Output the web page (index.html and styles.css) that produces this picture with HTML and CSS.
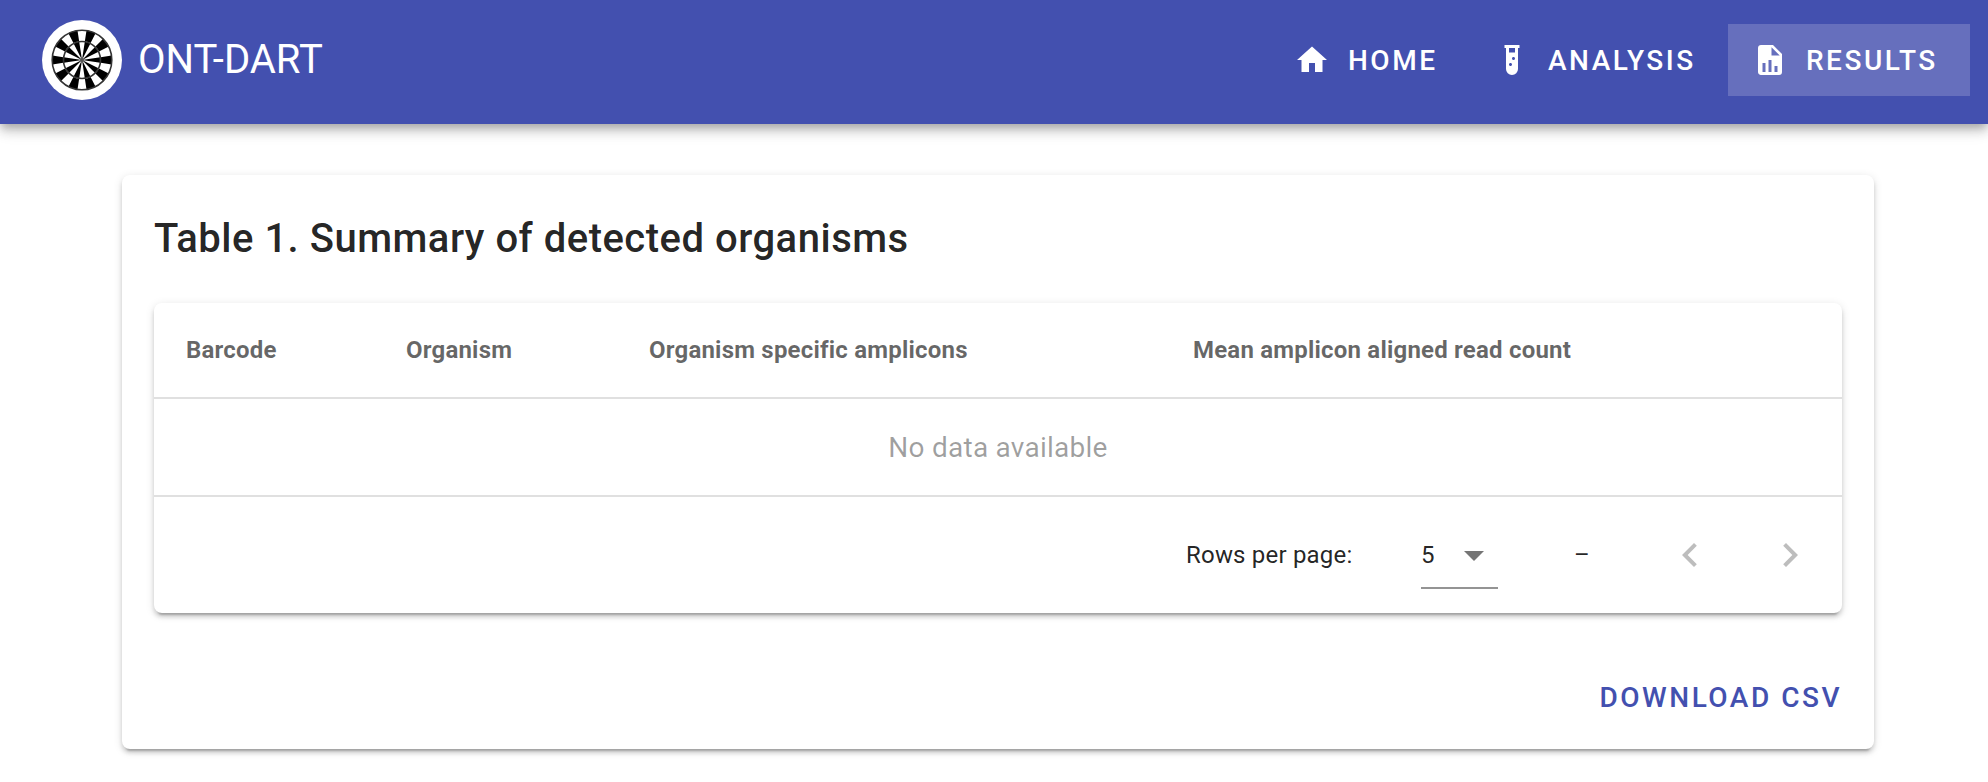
FILE: index.html
```html
<!DOCTYPE html>
<html lang="en">
<head>
<meta charset="utf-8">
<title>ONT-DART</title>
<link rel="stylesheet" href="styles.css">
</head>
<body>
<header class="toolbar">
  <div class="brand">
    <svg class="logo" viewBox="-40 -40 80 80">
      <circle r="40" fill="#fff"/>
      <circle class="ring-cells" r="24.5" pathLength="20"/>
      <circle class="bull-cells" r="9.25" pathLength="20"/>
      <circle class="wire" r="29.8"/>
      <circle class="wire" r="18.5"/>
      <circle r="2" fill="#555"/>
    </svg>
    <span class="brand-name">ONT-DART</span>
  </div>
  <nav class="nav">
    <a class="nav-item home"><svg class="icon" viewBox="0 0 24 24"><path d="M10,20V14H14V20H19V12H22L12,3L2,12H5V20H10Z"/></svg>HOME</a>
    <a class="nav-item analysis"><svg class="icon" viewBox="0 0 24 24"><path d="M7,2V4H8V18A4,4 0 0,0 12,22A4,4 0 0,0 16,18V4H17V2H7M11,16C10.4,16 10,15.6 10,15C10,14.4 10.4,14 11,14C11.6,14 12,14.4 12,15C12,15.6 11.6,16 11,16M13,12C12.4,12 12,11.6 12,11C12,10.4 12.4,10 13,10C13.6,10 14,10.4 14,11C14,11.6 13.6,12 13,12M14,7H10V4H14V7Z"/></svg>ANALYSIS</a>
    <a class="nav-item results active"><svg class="icon" viewBox="0 0 24 24"><path d="M13,9H18.5L13,3.5V9M6,2H14L20,8V20A2,2 0 0,1 18,22H6C4.89,22 4,21.1 4,20V4C4,2.89 4.89,2 6,2M7,20H9V14H7V20M11,20H13V12H11V20M15,20H17V16H15V20Z"/></svg>RESULTS</a>
  </nav>
</header>
<main class="card">
  <h1 class="card-title">Table 1. Summary of detected organisms</h1>
  <section class="table-card">
    <table class="table">
      <thead><tr><th class="c1">Barcode</th><th class="c2">Organism</th><th class="c3">Organism specific amplicons</th><th>Mean amplicon aligned read count</th></tr></thead>
      <tbody><tr><td colspan="4">No data available</td></tr></tbody>
    </table>
    <footer class="pager">
      <span class="label">Rows per page:</span>
      <div class="select"><span>5</span><svg class="caret" viewBox="0 0 20 10"><path d="M0 0H20L10 10Z"/></svg></div>
      <span class="range">–</span>
      <svg class="chevron prev" viewBox="0 0 24 24"><path d="M15.41,16.58L10.83,12L15.41,7.41L14,6L8,12L14,18L15.41,16.58Z"/></svg>
      <svg class="chevron next" viewBox="0 0 24 24"><path d="M8.59,16.58L13.17,12L8.59,7.41L10,6L16,12L10,18L8.59,16.58Z"/></svg>
    </footer>
  </section>
  <div class="actions"><a class="download">DOWNLOAD CSV</a></div>
</main>
</body>
</html>
```
FILE: styles.css
```css
* { box-sizing: border-box; }

body {
  margin: 0;
  height: 782px;
  overflow: hidden;
  background: #fff;
  color: rgba(0, 0, 0, .87);
  font-family: Roboto, sans-serif;
}

.toolbar {
  display: flex;
  justify-content: space-between;
  height: 124px;
  padding: 20px 18px 0 42px;
  background: #4350af;
  color: #fff;
  box-shadow: 0 4px 8px -2px rgba(0, 0, 0, .2), 0 8px 10px rgba(0, 0, 0, .14), 0 2px 20px rgba(0, 0, 0, .12);
}

.brand { display: flex; height: 80px; gap: 16px; }
.logo { width: 80px; height: 80px; }
.ring-cells { fill: none; stroke: #000; stroke-width: 11; stroke-dasharray: 1 1; stroke-dashoffset: .5; }
.bull-cells { fill: none; stroke: #000; stroke-width: 18.5; stroke-dasharray: 1 1; stroke-dashoffset: .5; }
.wire { fill: none; stroke: #333; stroke-width: 1.6; }
.brand-name { font-size: 40px; line-height: 80px; }

.nav { display: flex; height: 72px; margin-top: 4px; }
.nav-item {
  display: flex;
  align-items: center;
  font-size: 28px;
  font-weight: 500;
  letter-spacing: 2.5px;
}
.icon { width: 36px; height: 36px; margin-right: 18px; fill: currentColor; }
.home { width: 200px; padding-left: 26px; }
.analysis { width: 260px; padding-left: 26px; }
.results { width: 242px; padding-left: 24px; }
.active { background: #666fbd; }

.card {
  width: 1752px;
  height: 574px;
  margin: 51px 0 0 122px;
  padding: 32px;
  border-radius: 8px;
  background: #fff;
  box-shadow: 0 6px 2px -4px rgba(0, 0, 0, .2), 0 4px 4px rgba(0, 0, 0, .14), 0 2px 10px rgba(0, 0, 0, .12);
}
.card-title {
  margin: 0 0 32px;
  font-size: 40px;
  font-weight: 500;
  letter-spacing: .5px;
  line-height: 64px;
}

.table-card {
  height: 310px;
  border-radius: 8px;
  box-shadow: 0 6px 2px -4px rgba(0, 0, 0, .2), 0 4px 4px rgba(0, 0, 0, .14), 0 2px 10px rgba(0, 0, 0, .12);
}
.table { width: 100%; border-collapse: separate; border-spacing: 0; table-layout: fixed; }
.table th {
  height: 96px;
  padding: 0 32px;
  border-bottom: 2px solid #e0e0e0;
  color: rgba(0, 0, 0, .6);
  font-size: 24px;
  font-weight: 700;
  letter-spacing: .2px;
  text-align: left;
}
.c1 { width: 220px; }
.c2 { width: 243px; }
.c3 { width: 544px; }
.table td {
  height: 98px;
  padding: 0;
  border-bottom: 2px solid #e0e0e0;
  color: rgba(0, 0, 0, .38);
  font-size: 28px;
  letter-spacing: .25px;
  text-align: center;
}

.pager { display: flex; align-items: center; height: 116px; padding-left: 1032px; font-size: 24px; }
.label { width: 235px; letter-spacing: .2px; }
.select {
  display: flex;
  align-items: center;
  justify-content: space-between;
  width: 77px;
  height: 68px;
  padding-right: 14px;
  border-bottom: 2px solid #949494;
}
.select span { padding-top: 2px; }
.caret { width: 20px; height: 10px; margin-top: 3px; fill: #757575; }
.range { width: 88px; padding-left: 76px; }
.chevron { width: 48px; height: 48px; fill: #bdbdbd; }
.prev { margin-left: 80px; }
.next { margin-left: 52px; }

.actions { display: flex; justify-content: flex-end; padding-top: 57px; }
.download { color: #4350af; font-size: 28px; font-weight: 500; letter-spacing: 2.5px; line-height: 56px; }
```
